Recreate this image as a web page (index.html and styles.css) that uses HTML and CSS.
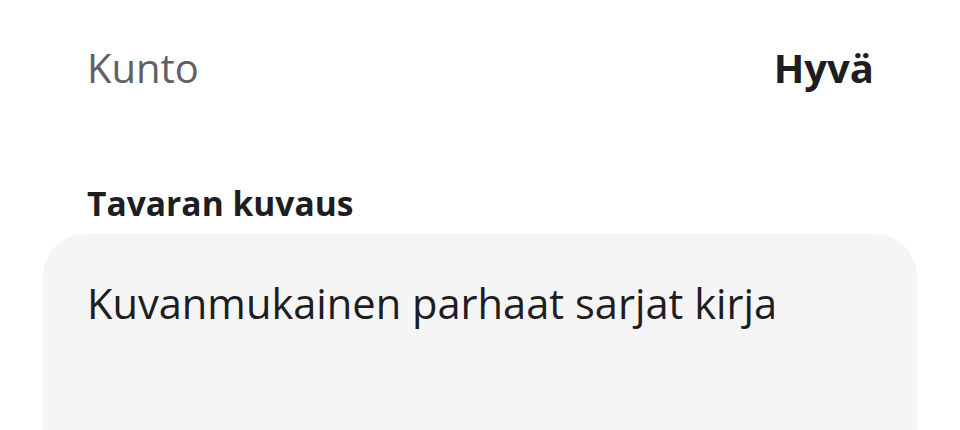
FILE: index.html
```html
<!DOCTYPE html>
<html lang="fi">
<head>
<meta charset="utf-8">
<link rel="stylesheet" href="styles.css">
</head>
<body>
<div class="page">
  <div class="row">
    <span class="label">Kunto</span>
    <span class="value">Hyvä</span>
  </div>
  <h2 class="section-title">Tavaran kuvaus</h2>
  <div class="desc-box">
    <p class="desc-text">Kuvanmukainen parhaat sarjat kirja</p>
  </div>
</div>
</body>
</html>
```

FILE: styles.css
```css
html, body {
  margin: 0;
  padding: 0;
  background: #ffffff;
  overflow: hidden;
}
body {
  font-family: "Open Sans", "Noto Sans", sans-serif;
  width: 960px;
  height: 430px;
}
.page {
  padding: 44px 43px 0 43px;
  display: flex;
  flex-direction: column;
}
.row {
  display: flex;
  justify-content: space-between;
  align-items: baseline;
  padding: 0 43px 0 44px;
  font-size: 40px;
  line-height: 48px;
}
.label {
  color: #5e6066;
  font-weight: 400;
}
.value {
  color: #1d1d22;
  font-weight: 700;
}
.section-title {
  margin: 91px 0 0 0;
  padding: 0 44px;
  font-size: 33.6px;
  line-height: 40px;
  font-weight: 700;
  color: #1d1d22;
}
.desc-box {
  margin-top: 11px;
  background: #f5f5f5;
  border-radius: 42px 42px 0 0;
  padding: 44px 44px 0 44px;
  height: 152px;
}
.desc-text {
  margin: 0;
  font-size: 41.6px;
  line-height: 50px;
  color: #1d1d22;
}
```
